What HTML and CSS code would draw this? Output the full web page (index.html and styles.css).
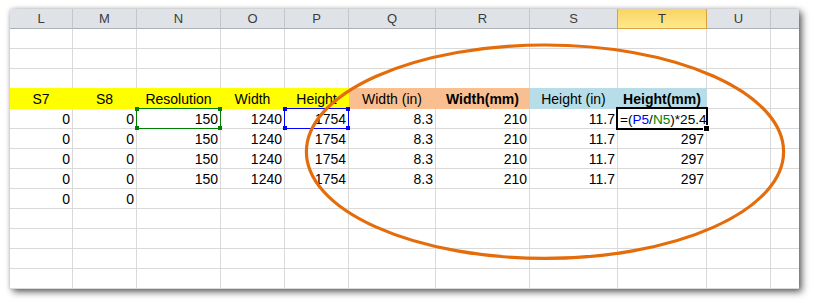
FILE: index.html
```html
<!DOCTYPE html>
<html>
<head>
<meta charset="utf-8">
<link rel="stylesheet" href="styles.css">
</head>
<body>
<div class="page">
  <div class="sheet">
    <div class="row head">
      <span>L</span><span>M</span><span>N</span><span>O</span><span>P</span><span>Q</span><span>R</span><span>S</span><span class="act">T</span><span>U</span><span></span>
    </div>
    <div class="row"><span></span><span></span><span></span><span></span><span></span><span></span><span></span><span></span><span></span><span></span><span></span></div>
    <div class="row"><span></span><span></span><span></span><span></span><span></span><span></span><span></span><span></span><span></span><span></span><span></span></div>
    <div class="row"><span></span><span></span><span></span><span></span><span></span><span></span><span></span><span></span><span></span><span></span><span></span></div>
    <div class="row titles">
      <span class="y">S7</span><span class="y">S8</span><span class="y">Resolution</span><span class="y">Width</span><span class="y">Height</span>
      <span class="o">Width (in)</span><span class="o b">Width(mm)</span>
      <span class="bl">Height (in)</span><span class="bl b">Height(mm)</span>
      <span></span><span></span>
    </div>
    <div class="row">
      <span class="n">0</span><span class="n">0</span>
      <span class="n sel"><i class="ref green"><b class="tl"></b><b class="tr"></b><b class="bl2"></b><b class="br"></b></i>150</span>
      <span class="n">1240</span>
      <span class="n sel"><i class="ref blue"><b class="tl"></b><b class="tr"></b><b class="bl2"></b><b class="br"></b></i>1754</span>
      <span class="n">8.3</span><span class="n">210</span><span class="n">11.7</span>
      <span class="f sel"><i class="active"><b class="handle"></b></i>=(<em class="pb">P5</em>/<em class="pg">N5</em>)*25.4</span>
      <span></span><span></span>
    </div>
    <div class="row">
      <span class="n">0</span><span class="n">0</span><span class="n">150</span><span class="n">1240</span><span class="n">1754</span><span class="n">8.3</span><span class="n">210</span><span class="n">11.7</span><span class="n">297</span><span></span><span></span>
    </div>
    <div class="row">
      <span class="n">0</span><span class="n">0</span><span class="n">150</span><span class="n">1240</span><span class="n">1754</span><span class="n">8.3</span><span class="n">210</span><span class="n">11.7</span><span class="n">297</span><span></span><span></span>
    </div>
    <div class="row">
      <span class="n">0</span><span class="n">0</span><span class="n">150</span><span class="n">1240</span><span class="n">1754</span><span class="n">8.3</span><span class="n">210</span><span class="n">11.7</span><span class="n">297</span><span></span><span></span>
    </div>
    <div class="row">
      <span class="n">0</span><span class="n">0</span><span></span><span></span><span></span><span></span><span></span><span></span><span></span><span></span><span></span>
    </div>
    <div class="row"><span></span><span></span><span></span><span></span><span></span><span></span><span></span><span></span><span></span><span></span><span></span></div>
    <div class="row"><span></span><span></span><span></span><span></span><span></span><span></span><span></span><span></span><span></span><span></span><span></span></div>
    <div class="row"><span></span><span></span><span></span><span></span><span></span><span></span><span></span><span></span><span></span><span></span><span></span></div>
    <div class="row"><span></span><span></span><span></span><span></span><span></span><span></span><span></span><span></span><span></span><span></span><span></span></div>
  </div>
  <svg class="mark" width="814" height="303" viewBox="0 0 814 303" xmlns="http://www.w3.org/2000/svg">
    <ellipse cx="545" cy="151.7" rx="238.6" ry="106.7" fill="none" stroke="#e46c0a" stroke-width="3.2"/>
  </svg>
</div>
</body>
</html>
```
FILE: styles.css
```css
html, body {
  margin: 0;
  padding: 0;
  background: #ffffff;
}

.page {
  position: relative;
  width: 814px;
  height: 303px;
  overflow: hidden;
}

.sheet {
  margin: 9px 0 0 10px;
  width: 789px;
  overflow: hidden;
  background: #ffffff;
  box-shadow: 3px 3px 7px rgba(0, 0, 0, 0.6), 0 0 4px rgba(0, 0, 0, 0.18);
  font-family: "Liberation Sans", Arial, sans-serif;
  font-size: 14px;
  color: #000;
}

.row {
  display: grid;
  grid-template-columns: 63px 64px 84px 64px 64px 87px 94px 88px 89px 64px 64px;
  width: 853px;
}

.row > span {
  display: block;
  box-sizing: border-box;
  height: 20px;
  line-height: 21px;
  border-right: 1px solid #d9d9d9;
  border-bottom: 1px solid #d9d9d9;
  padding: 0 2px;
  white-space: nowrap;
  overflow: hidden;
}

.head > span {
  background: #dfe3e8;
  border-right-color: #c3c7cd;
  border-bottom-color: #abb0b7;
  text-align: center;
  color: #3b3b3b;
  font-size: 13px;
  line-height: 20px;
}

.head > span.act {
  background: linear-gradient(#f9d364, #ffe98d);
  border-right-color: #dca13c;
  border-bottom-color: #dca13c;
  box-shadow: -1px 0 0 #dca13c;
  color: #333;
}

.titles > span {
  text-align: center;
}

.titles > span.y {
  background: #ffff00;
  border-color: #ffff00;
  box-shadow: 0 -1px 0 #ffff00;
}

.titles > span.o {
  background: #f9bf90;
  border-color: #f9bf90;
  box-shadow: 0 -1px 0 #f9bf90;
}

.titles > span.bl {
  background: #b7dee8;
  border-color: #b7dee8;
  box-shadow: 0 -1px 0 #b7dee8;
}

.titles > span.b {
  font-weight: bold;
}

.row > span.n {
  text-align: right;
}

.row > span.sel {
  position: relative;
  overflow: visible;
}

.row > span.f {
  font-size: 13.6px;
  padding-left: 2px;
}

.f em {
  font-style: normal;
}

.pb { color: #0000ff; }
.pg { color: #008000; }

.ref {
  position: absolute;
  left: -1px;
  top: -1px;
  right: -1px;
  bottom: -1px;
  border: 1px solid;
  z-index: 2;
}

.ref.green { border-color: #008000; }
.ref.blue { border-color: #0000ff; }

.ref b {
  position: absolute;
  width: 4px;
  height: 4px;
}

.ref.green b { background: #008000; }
.ref.blue b { background: #0000ff; }

.ref .tl { left: -2px; top: -2px; }
.ref .tr { right: -2px; top: -2px; }
.ref .bl2 { left: -2px; bottom: -2px; }
.ref .br { right: -2px; bottom: -2px; }

.active {
  position: absolute;
  left: -2px;
  top: -2px;
  right: -2px;
  bottom: -2px;
  border: 2px solid #000;
  z-index: 2;
}

.handle {
  position: absolute;
  right: -4px;
  bottom: -4px;
  width: 5px;
  height: 5px;
  background: #000;
  border: 1px solid #fff;
}

.mark {
  position: absolute;
  left: 0;
  top: 0;
  z-index: 5;
  pointer-events: none;
}
```
